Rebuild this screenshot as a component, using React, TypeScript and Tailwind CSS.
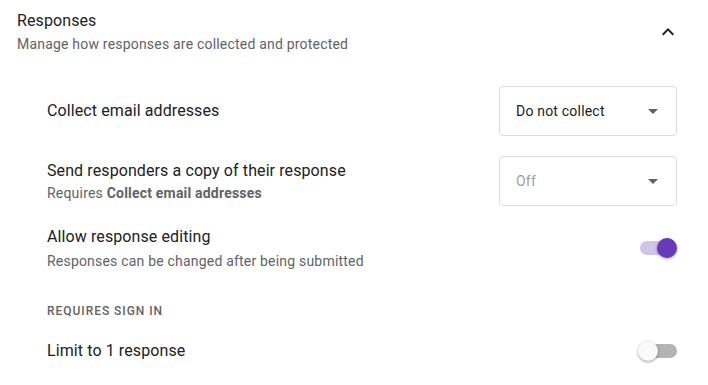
import { ReactNode } from "react";

function Dropdown({ value, disabled }: { value: string; disabled?: boolean }) {
  return (
    <div className="flex h-[50px] w-[178px] shrink-0 items-center justify-between rounded border border-[#dadce0] pl-4 pr-[18px]">
      <span
        className={
          disabled
            ? "text-sm tracking-[0.2px] text-[#9aa0a6]"
            : "text-sm tracking-[0.2px] text-[#202124]"
        }
      >
        {value}
      </span>
      <svg width="10" height="5" viewBox="0 0 10 5">
        <path d="M0 0 L5 5 L10 0 Z" fill="#5f6368" />
      </svg>
    </div>
  );
}

function Toggle({ on }: { on: boolean }) {
  return (
    <div className="relative h-5 w-[37px] shrink-0">
      <div
        className={
          on
            ? "absolute left-0 top-[3px] h-[14px] w-[36px] rounded-full bg-[#d1c4e9]"
            : "absolute left-[1px] top-[3px] h-[14px] w-[36px] rounded-full bg-[#b3b3b3]"
        }
      />
      <div
        className={
          on
            ? "absolute right-0 top-0 h-5 w-5 rounded-full bg-[#673ab7] shadow-[0_1px_3px_rgba(0,0,0,0.35)]"
            : "absolute left-[-2px] top-0 h-5 w-5 rounded-full bg-[#fafafa] shadow-[0_1px_3px_rgba(0,0,0,0.4)]"
        }
      />
    </div>
  );
}

function Row({
  title,
  sub,
  control,
  pad,
  subGap = "mt-[2px]",
}: {
  title: string;
  sub?: ReactNode;
  control: ReactNode;
  pad?: string;
  subGap?: string;
}) {
  return (
    <div className={pad ? "flex items-start justify-between" : "flex items-center justify-between"}>
      <div className={pad ?? ""}>
        <div className="text-base leading-6 tracking-[0.1px] text-[#202124]">{title}</div>
        {sub && <div className={`${subGap} text-sm leading-5 tracking-[0.2px] text-[#5f6368]`}>{sub}</div>}
      </div>
      {control}
    </div>
  );
}

export default function App() {
  return (
    <div className="h-[385px] w-[708px] bg-white font-['Roboto',sans-serif]">
      <header className="flex items-start justify-between pl-[17px] pr-[28px] pt-[9px]">
        <div>
          <h2 className="text-base leading-6 tracking-[0.1px] text-[#202124]">Responses</h2>
          <p className="mt-[1px] text-sm leading-5 tracking-[0.2px] text-[#5f6368]">
            Manage how responses are collected and protected
          </p>
        </div>
        <svg className="mt-[11px]" width="24" height="24" viewBox="0 0 24 24">
          <path d="M12 8l-6 6 1.41 1.41L12 10.83l4.59 4.58L18 14z" fill="#202124" />
        </svg>
      </header>

      <div className="pl-[47px] pr-[31px] pt-8">
        <Row title="Collect email addresses" control={<Dropdown value="Do not collect" />} />
        <div className="mt-5">
          <Row
            pad="pt-[3px]"
            subGap="mt-0"
            title="Send responders a copy of their response"
            sub={
              <>
                Requires <span className="font-bold">Collect email addresses</span>
              </>
            }
            control={<Dropdown value="Off" disabled />}
          />
        </div>
        <div className="mt-[19px]">
          <Row
            title="Allow response editing"
            sub="Responses can be changed after being submitted"
            control={<Toggle on />}
          />
        </div>
        <div className="mt-[32px] text-xs font-medium uppercase leading-4 tracking-[0.08em] text-[#5f6368]">
          Requires sign in
        </div>
        <div className="mt-5">
          <Row title="Limit to 1 response" control={<Toggle on={false} />} />
        </div>
      </div>
    </div>
  );
}
